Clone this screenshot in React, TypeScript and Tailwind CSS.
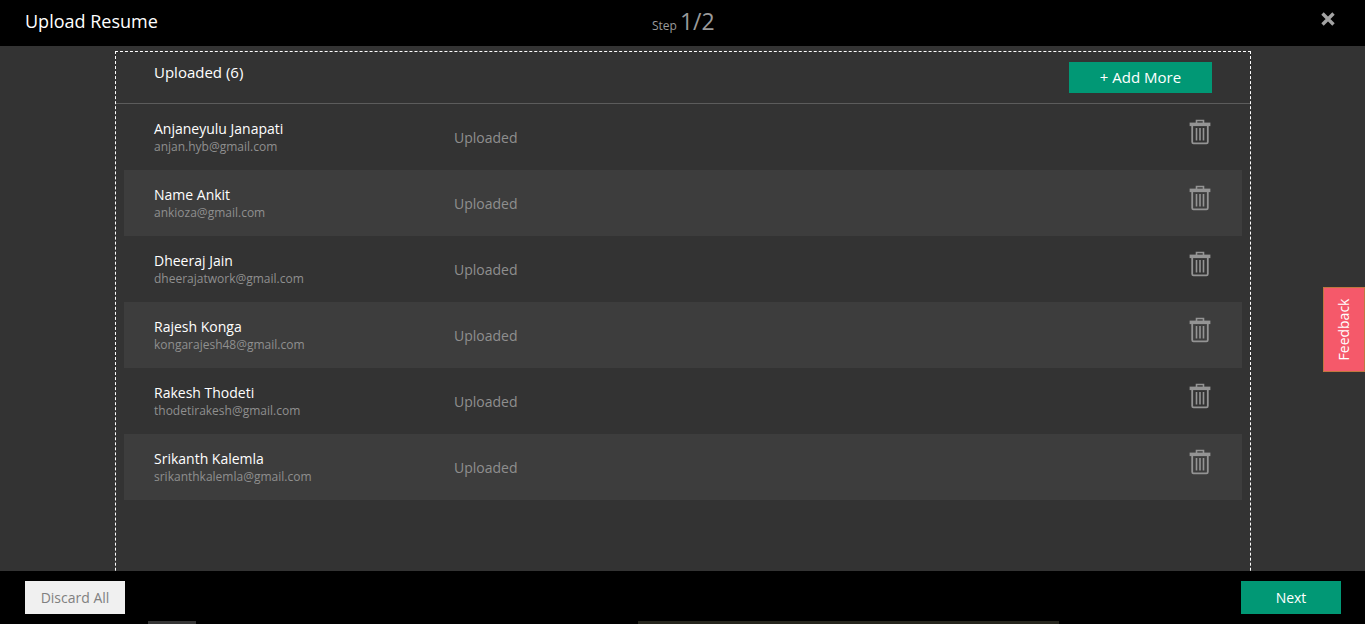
const CANDIDATES = [
  { name: "Anjaneyulu Janapati", email: "anjan.hyb@gmail.com" },
  { name: "Name Ankit", email: "ankioza@gmail.com" },
  { name: "Dheeraj Jain", email: "dheerajatwork@gmail.com" },
  { name: "Rajesh Konga", email: "kongarajesh48@gmail.com" },
  { name: "Rakesh Thodeti", email: "thodetirakesh@gmail.com" },
  { name: "Srikanth Kalemla", email: "srikanthkalemla@gmail.com" },
];

function TrashIcon() {
  return (
    <svg width="22" height="26" viewBox="0 0 22 26" fill="none" stroke="#949494" strokeWidth="1.6">
      <path d="M1.500 6.200V4.500h19v1.700z" strokeWidth="1.800" />
      <path d="M7.500 4.500V1.500h7v3" />
      <path d="M3.200 6.200V23q0 1.300 1.300 1.300h13q1.300 0 1.300-1.300V6.200" strokeWidth="1.800" />
      <path d="M7.500 9v12.500M11 9v12.500M14.500 9v12.500" />
    </svg>
  );
}

function CloseIcon() {
  return (
    <svg width="14" height="14" viewBox="0 0 14 14" stroke="#a3a3a3" strokeWidth="3.400">
      <path d="M1.500 1.500l11 11M12.500 1.500l-11 11" />
    </svg>
  );
}

export default function App() {
  return (
    <div className="relative flex h-[624px] flex-col overflow-hidden bg-black font-['Open_Sans',sans-serif]">
      <header className="relative flex h-[46px] shrink-0 items-center justify-between bg-black pl-[25px] pr-[30px]">
        <h1 className="pb-[5px] text-[18px] leading-6 text-white">Upload Resume</h1>
        <div className="absolute left-[652px] top-[5px] flex items-baseline gap-[3px] text-[#9a9a9a]">
          <span className="text-[12px]">Step</span>
          <span className="text-[23px] leading-8">1/2</span>
        </div>
        <button type="button" className="mb-[8px]">
          <CloseIcon />
        </button>
      </header>

      <main className="min-h-0 flex-1 bg-[#333333] pl-[115px] pr-[114px] pt-[5px]">
        <div className="h-[600px] border border-dashed border-white">
          <div className="flex h-[52px] justify-between border-b border-[#5c5c5c] px-[38px]">
            <h2 className="pt-[10px] text-[15px] leading-5 text-white">Uploaded (6)</h2>
            <button
              type="button"
              className="mt-[10px] h-[31px] w-[143px] bg-[#019875] text-[15px] text-white"
            >
              + Add More
            </button>
          </div>
          <ul className="px-[8px]">
            {CANDIDATES.map((c, i) => (
              <li
                key={c.email}
                className={`flex h-[66px] pl-[30px] pr-[31px] ${i % 2 === 1 ? "bg-[#3d3d3d]" : ""}`}
              >
                <div className="w-[300px] pt-[15px]">
                  <p className="text-[14px] leading-[20px] text-white">{c.name}</p>
                  <p className="text-[12px] leading-[16px] text-[#8f8f8f]">{c.email}</p>
                </div>
                <p className="flex-1 pt-[24px] text-[14px] leading-5 text-[#8f8f8f]">Uploaded</p>
                <div className="pt-[15px]">
                  <TrashIcon />
                </div>
              </li>
            ))}
          </ul>
        </div>
      </main>

      <footer className="relative flex h-[53px] shrink-0 justify-between bg-black pl-[25px] pr-[24px] pt-[10px]">
        <button type="button" className="h-[33px] w-[100px] bg-[#f0f0f0] text-[14px] text-[#808080]">
          Discard All
        </button>
        <button type="button" className="h-[33px] w-[100px] bg-[#019875] text-[14px] text-white">
          Next
        </button>
        <div className="absolute bottom-0 left-[148px] h-[3px] w-[48px] bg-[#363636]" />
        <div className="absolute bottom-0 left-[638px] h-[3px] w-[421px] bg-[#26261e]" />
      </footer>

      <div className="absolute left-[1323px] top-[287px] flex h-[85px] w-[42px] items-center justify-center border border-[#c0763f] bg-[#f5596a]">
        <span className="-rotate-90 whitespace-nowrap text-[14px] text-white">Feedback</span>
      </div>
    </div>
  );
}
